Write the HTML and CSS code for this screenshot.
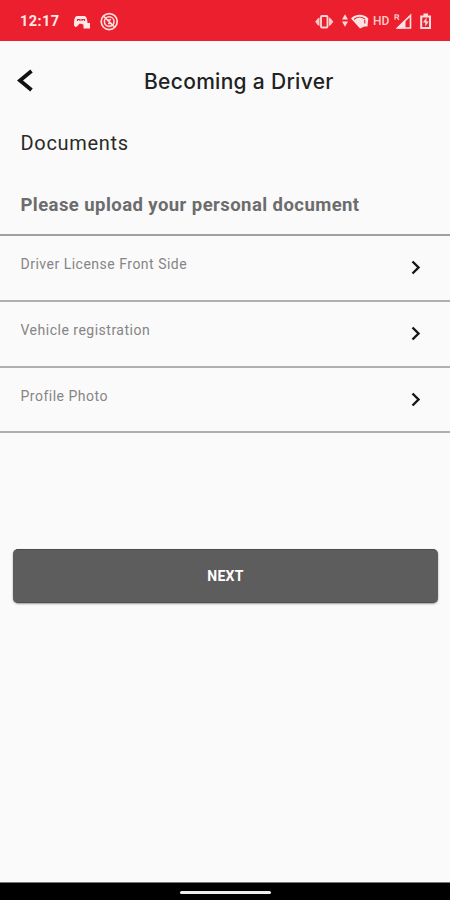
FILE: index.html
```
<!DOCTYPE html>
<html lang="en">

<head>
  <meta charset="utf-8">
  <meta name="viewport" content="width=device-width, initial-scale=1">
  <title>Becoming a Driver</title>
  <link rel="stylesheet" href="styles.css">
</head>

<body>

<div class="status-bar">
  <span class="clock">12:17</span>
  <!-- game mode + blocked notification -->
  <svg class="status-left" width="48" height="20" viewBox="72 10 48 20">
    <path d="M77 15h7c2 0 3 2 3.300 5l.4 3.500H83l-2-.8h-1.500l-2.500 2.800c-1.500 1-3 0-3-2 0-4 .6-8.500 3-8.500z" fill="#ffe9e9"/>
    <path d="M77.500 20v-1.500h2.500v1.500M82 20v-1.500h2.500V20" fill="none" stroke="#ec1f2e" stroke-width="1.200"/>
    <path d="M83.500 22h6.500v5.500h-6.500z" fill="#ffe9e9"/>
    <g fill="none" stroke="#ffdede">
      <circle cx="109.200" cy="20.600" r="8" stroke-width="1.700"/>
      <circle cx="109.200" cy="20.600" r="4.800" stroke-width="1.600"/>
      <path d="M104 15.500l10.500 10.500M107 19.500l4-1M108 22.500l4 0" stroke-width="1.700"/>
    </g>
  </svg>
  <!-- vibrate, data arrows, wifi -->
  <svg class="status-right" width="55" height="20" viewBox="315 10 55 20">
    <rect x="321" y="15" width="6.500" height="11.500" rx="1" fill="none" stroke="#ffd5d5" stroke-width="1.900"/>
    <path d="M319.500 16.500v8.500l-1.800-1-2.500-3.300 2.500-3.200zM329 16.500v8.500l1.800-1 2.500-3.300-2.500-3.200z" fill="#ffc9c9"/>
    <path d="M345 13.300l3 5.200h-6zM345 25.800l3-5.200h-6z" fill="#ffd9d9"/>
    <path d="M351 17.500c4.500-5 13-5 17.300 0l-.8 8h-3l-4.500 2z" fill="#ffe2e2"/>
    <path d="M354 18.200c3.500-2.700 8-2.700 11 0M364.800 19v3.500" fill="none" stroke="#ec1f2e" stroke-width="1.100"/>
  </svg>
  <span class="hd">HD</span>
  <!-- roaming signal, battery -->
  <svg class="status-end" width="41" height="20" viewBox="393 10 41 20">
    <path d="M395 18.800v-5h2q1.700 0 1.700 1.300t-1.700 1.300h-2m2 0l2 2.400" fill="none" stroke="#ffc9c9" stroke-width="1.200"/>
    <path d="M410.500 14.500v12.500h-13z" fill="none" stroke="#ffe2e2" stroke-width="1.600"/>
    <path d="M397 27.500l8.500-8.500v8.500z" fill="#ffe2e2"/>
    <path d="M423.500 12.500h4.500v2h3v13.500h-10.800v-13.500h3.300z" fill="#ffdcdc"/>
    <path d="M422.200 16.500v9.500h6.800v-9.500z" fill="#ec1f2e"/>
    <path d="M426.500 16.500l-3.500 5h2.300v4l3.500-5h-2.300z" fill="#ffdcdc"/>
  </svg>
</div>

<div class="header">
  <svg class="back" width="18" height="24" viewBox="0 0 18 24">
    <path d="M16.500 2L5 11.500l11.500 9.500" fill="none" stroke="#111" stroke-width="3.800"/>
  </svg>
  <h1 class="title">Becoming a Driver</h1>
</div>

<div class="content">
  <h2 class="section-title">Documents</h2>
  <p class="hint">Please upload your personal document</p>

  <div class="documents">
    <div class="document">
      <span class="name">Driver License Front Side</span>
      <svg class="arrow" width="12" height="16" viewBox="0 0 12 16"><path d="M2.500 2.500l6 6-6 6" fill="none" stroke="#161616" stroke-width="2.400"/></svg>
    </div>
    <div class="document">
      <span class="name">Vehicle registration</span>
      <svg class="arrow" width="12" height="16" viewBox="0 0 12 16"><path d="M2.500 2.500l6 6-6 6" fill="none" stroke="#161616" stroke-width="2.400"/></svg>
    </div>
    <div class="document">
      <span class="name">Profile Photo</span>
      <svg class="arrow" width="12" height="16" viewBox="0 0 12 16"><path d="M2.500 2.500l6 6-6 6" fill="none" stroke="#161616" stroke-width="2.400"/></svg>
    </div>
  </div>

  <button type="button" class="next">NEXT</button>
</div>

<div class="nav-bar">
  <div class="handle"></div>
</div>

</body></html>
```
FILE: styles.css
```
* {
  box-sizing: border-box;
}

body {
  margin: 0;
  height: 900px;
  display: flex;
  flex-direction: column;
  overflow: hidden;
  background-color: #fafafa;
  font-family: Roboto, sans-serif;
}

h1, h2, p {
  margin: 0;
  font-weight: 400;
}

svg {
  display: block;
  flex: none;
}

.status-bar {
  height: 41px;
  padding: 0 16px 0 20px;
  display: flex;
  align-items: center;
  background-color: #ec1f2e;
  color: #ffe9e9;
}

.clock {
  width: 52px;
  padding-top: 2px;
  font-size: 14.5px;
  font-weight: 700;
  letter-spacing: 0.4px;
}

.status-right {
  margin-left: auto;
}

.hd {
  width: 23px;
  padding-left: 3px;
  font-size: 12px;
  font-weight: 500;
  color: #ffc9c9;
}

.header {
  height: 79px;
  padding-left: 15px;
  display: flex;
  align-items: center;
}

.title {
  flex: 1;
  padding: 1px 0 0 111px;
  font-family: Inter, sans-serif;
  font-size: 21px;
  font-weight: 500;
  letter-spacing: 0.3px;
  color: #222;
}

.content {
  flex: 1;
}

.section-title {
  height: 46px;
  padding-left: 20.5px;
  font-size: 20px;
  line-height: 46px;
  letter-spacing: 0.7px;
  color: #2a2a2a;
}

.hint {
  height: 68px;
  padding: 27px 0 0 20.5px;
  font-size: 18.5px;
  font-weight: 700;
  line-height: 24px;
  letter-spacing: 0.43px;
  color: #6c6c6c;
}

.documents {
  border-top: 2px solid #a0a0a0;
}

.document {
  height: 65.8px;
  padding: 0 28px 1px 20.5px;
  display: flex;
  align-items: center;
  justify-content: space-between;
  border-bottom: 2px solid #b0b0b0;
}

.name {
  padding-bottom: 6px;
  font-size: 14px;
  letter-spacing: 0.5px;
  color: #858585;
}

.next {
  display: block;
  width: 425px;
  height: 54px;
  margin: 115.6px 0 0 13px;
  padding: 1px 0 0;
  border: 0;
  border-top: 1px solid #4c4c4c;
  border-bottom: 1px solid #505050;
  border-radius: 5px;
  background-color: #5d5d5d;
  box-shadow: 0 1px 2px #999;
  color: #fff;
  font-family: Roboto, sans-serif;
  font-size: 14px;
  font-weight: 700;
  letter-spacing: 0.3px;
}

.nav-bar {
  height: 18px;
  display: flex;
  align-items: center;
  justify-content: center;
  border-top: 1px solid #777;
  background-color: #000;
}

.handle {
  width: 91px;
  height: 3px;
  margin-top: 2px;
  border-radius: 2px;
  background-color: #eee;
}
```
